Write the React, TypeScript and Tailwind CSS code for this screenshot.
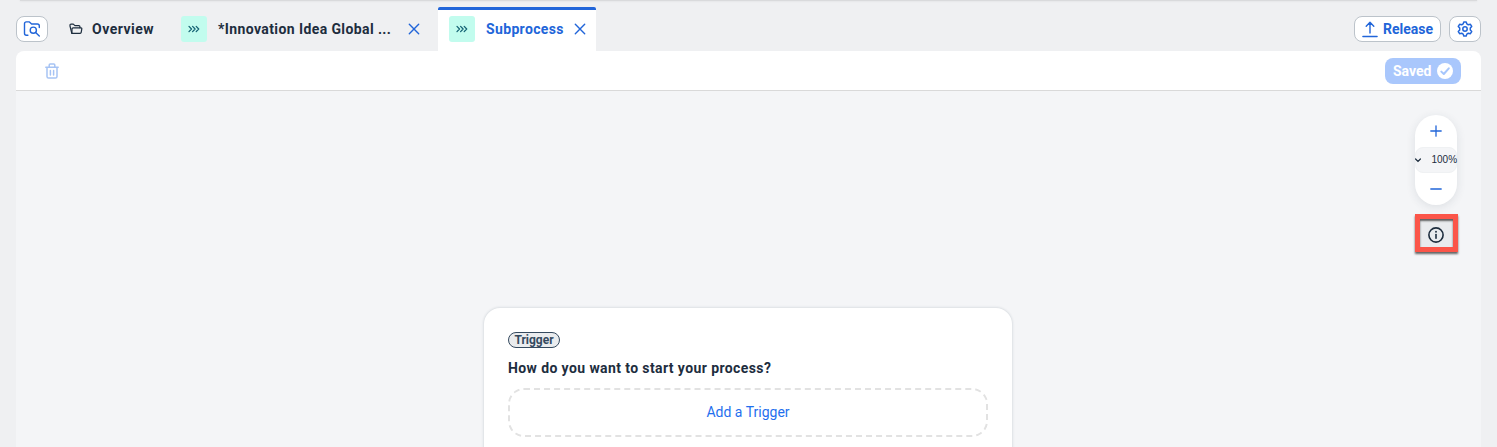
import React from "react";

function SearchFolderIcon() {
  return (
    <svg width="18" height="18" viewBox="0 0 18 18" fill="none" stroke="#2165d9" strokeWidth="1.400" strokeLinecap="round" strokeLinejoin="round">
      <path d="M4.900 15.200H3.400A1.900 1.900 0 0 1 1.500 13.300V3.800A1.900 1.900 0 0 1 3.400 1.900H6.400L8.600 4H14.400A1.900 1.900 0 0 1 16.300 5.900V7.600" />
      <circle cx="10.300" cy="10.200" r="3.100" />
      <path d="M12.600 12.500L16.300 16" />
    </svg>
  );
}

function OpenFolderIcon() {
  return (
    <svg width="14" height="12" viewBox="0 0 14 12" fill="none" stroke="#1d2d3e" strokeWidth="1.200" strokeLinecap="round" strokeLinejoin="round">
      <path d="M2.800 10.300L1 3V2.100A1 1 0 0 1 2 1.100H4.300L5.900 2.600H9.900A1 1 0 0 1 10.900 3.600V4.700" />
      <path d="M2.900 10.300L3 5.900A1.100 1.100 0 0 1 4.100 4.800H12A.8.8 0 0 1 12.800 5.800L12.200 9.400A1.100 1.100 0 0 1 11.100 10.300Z" />
    </svg>
  );
}

function ProcessIcon() {
  return (
    <span className="flex size-[26px] shrink-0 items-center justify-center rounded-[3px] bg-[#c2fcee]">
      <svg width="12" height="8" viewBox="0 0 12 8" fill="none" stroke="#156475" strokeWidth="1.300" strokeLinecap="round" strokeLinejoin="round">
        <path d="M1 1.400L3.500 4L1 6.600M4.600 1.400L7.100 4L4.600 6.600M8.200 1.400L10.700 4L8.200 6.600" />
      </svg>
    </span>
  );
}

function CloseIcon() {
  return (
    <svg className="shrink-0" width="12" height="12" viewBox="0 0 12 12" fill="none" stroke="#2165d9" strokeWidth="1.400" strokeLinecap="round">
      <path d="M1.300 1.300L10.700 10.700M10.700 1.300L1.300 10.700" />
    </svg>
  );
}

function UploadIcon() {
  return (
    <svg width="16" height="17" viewBox="0 0 16 17" fill="none" stroke="#2165d9" strokeWidth="1.400" strokeLinecap="round" strokeLinejoin="round">
      <path d="M8 12V1.500M4.200 5.200L8 1.300L11.800 5.200M.9 15.500H15.100" />
    </svg>
  );
}

function GearIcon() {
  return (
    <svg width="16" height="16" viewBox="0 0 16 16" fill="none" stroke="#2165d9" strokeWidth="1.500" strokeLinejoin="round">
      <path d="M6.800.9H9.200L9.800 2.900L11.300 3.750L13.400 3.300L14.700 5.400L13.300 7V9L14.700 10.600L13.400 12.700L11.300 12.250L9.800 13.100L9.200 15.100H6.800L6.200 13.100L4.700 12.250L2.600 12.700L1.300 10.600L2.700 9V7L1.300 5.400L2.600 3.300L4.700 3.750L6.200 2.900Z" />
      <circle cx="8" cy="8" r="2.200" />
    </svg>
  );
}

function TrashIcon() {
  return (
    <svg width="14" height="16" viewBox="0 0 14 16" fill="none" stroke="#a6c3f4" strokeWidth="1.500" strokeLinecap="round" strokeLinejoin="round">
      <path d="M.8 4.200H13.200M4.200 4V1.900A1 1 0 0 1 5.200.9H8.800A1 1 0 0 1 9.800 1.900V4M2 4.500V13.500A1.600 1.600 0 0 0 3.600 15.100H10.400A1.600 1.600 0 0 0 12 13.500V4.500M5.400 7.400V12M8.600 7.400V12" />
    </svg>
  );
}

function SavedIcon() {
  return (
    <svg width="16" height="16" viewBox="0 0 16 16" fill="none">
      <circle cx="8" cy="8" r="8" fill="#fff" />
      <path d="M4.300 8.600L6.800 11L11.800 5.300" stroke="#a6c6fc" strokeWidth="2" strokeLinecap="round" strokeLinejoin="round" />
    </svg>
  );
}

export default function App() {
  return (
    <div className="flex h-[447px] w-full flex-col overflow-hidden bg-[#eff0f2] px-4 font-[Roboto,sans-serif] text-sm text-[#1d2d3e]">
      <div className="mx-1 h-px shrink-0 bg-[#d9dadc] shadow-[0_0_2px_#cfd1d4]" />
      <header className="flex h-[50px] shrink-0 items-start whitespace-nowrap font-bold">
        <button className="mt-[15px] flex h-[26px] w-8 items-center justify-center rounded-lg border border-[#bcc3ca] bg-white">
          <SearchFolderIcon />
        </button>
        <div className="ml-[21px] mt-[15px] flex h-[26px] w-[112px] items-center">
          <OpenFolderIcon />
          <span className="ml-[9px] tracking-[0.500px]">Overview</span>
        </div>
        <div className="mt-[15px] flex h-[26px] w-[257px] items-center">
          <ProcessIcon />
          <span className="ml-[11px] w-[173px] tracking-[0.400px]">*Innovation Idea Global ...</span>
          <span className="ml-[17px] flex"><CloseIcon /></span>
        </div>
        <div className="mt-[6px] flex h-11 w-[158px] items-center rounded-t-[2px] border-t-[3px] border-[#2165d9] bg-white pb-[3px] pl-[11px] text-[#2165d9]">
          <ProcessIcon />
          <span className="ml-[11px] w-[77px] tracking-[0.350px]">Subprocess</span>
          <span className="ml-[11px] flex"><CloseIcon /></span>
        </div>
        <div className="ml-auto mt-[15px] flex gap-2 text-[#2165d9]">
          <button className="flex h-[26px] w-[87px] items-center gap-[5px] rounded-lg border border-[#bcc3ca] bg-white pl-[7px]">
            <UploadIcon />
            <span>Release</span>
          </button>
          <button className="flex h-[26px] w-8 items-center justify-center rounded-lg border border-[#bcc3ca] bg-white">
            <GearIcon />
          </button>
        </div>
      </header>
      <div className="flex h-10 shrink-0 items-center justify-between rounded-t-lg border-b border-[#d9d9d9] bg-white pl-[29px] pr-5">
        <TrashIcon />
        <button className="flex h-[26px] w-[76px] items-center justify-between rounded-lg bg-[#a9c7fc] px-2 font-bold text-white">
          <span>Saved</span>
          <SavedIcon />
        </button>
      </div>
      <main className="relative flex flex-1 bg-[#f4f5f7] pl-[468px] pt-[217px]">
        <section className="h-[200px] w-[528px] shrink-0 rounded-2xl bg-white px-6 pt-6 shadow-[0_0_3px_rgba(34,53,72,0.220)]">
          <div className="flex h-4 w-[52px] items-center justify-center rounded-full border border-[#354a5f] bg-[#eaecee] text-xs font-bold text-[#354a5f]">
            Trigger
          </div>
          <h2 className="mt-[10px] h-5 whitespace-nowrap font-bold leading-5 tracking-[0.400px]">How do you want to start your process?</h2>
          <button className="mt-[10px] flex h-[49px] w-full items-center justify-center rounded-2xl border-2 border-dashed border-[#e2e2e2] pb-[2px] text-[#1f6fee]">
            Add a Trigger
          </button>
        </section>
        <div className="absolute right-[23px] top-6 flex w-[43px] flex-col items-start gap-[9px]">
          <div className="flex h-[90px] w-[42px] flex-col rounded-[21px] bg-white shadow-[0_2px_10px_rgba(34,53,72,0.110)]">
            <button className="flex h-8 items-center justify-center">
              <svg width="12" height="12" viewBox="0 0 12 12" stroke="#2165d9" strokeWidth="1.300" strokeLinecap="round"><path d="M6 .8V11.200M.8 6H11.200" /></svg>
            </button>
            <div className="flex h-[26px] items-center rounded-lg border border-[#eff1f3] bg-[#f4f5f7] font-['Liberation_Sans',sans-serif] text-[10px]">
              <svg className="-ml-px shrink-0" width="6" height="5" viewBox="0 0 6 5" fill="none" stroke="#1d2d3e" strokeWidth="1.200" strokeLinecap="round"><path d="M.6 1L3 3.400L5.400 1" /></svg>
              <span className="ml-[10.500px]">100%</span>
            </div>
            <button className="flex h-[31px] items-center justify-center">
              <svg width="12" height="2" viewBox="0 0 12 2" stroke="#2165d9" strokeWidth="1.300" strokeLinecap="round"><path d="M.8 1H11.200" /></svg>
            </button>
          </div>
          <button className="flex h-[38px] w-[43px] items-center justify-center border-[5px] border-[#fb5549] bg-[#e9ebee] shadow-[0_2px_2px_rgba(0,0,0,0.600),inset_0_2px_2px_rgba(0,0,0,0.600)]">
            <svg className="relative -left-px top-[2px]" width="16" height="16" viewBox="0 0 16 16" fill="none" stroke="#1d2d3e" strokeWidth="1.600" strokeLinecap="round" strokeLinejoin="round">
              <circle cx="8" cy="8" r="7.100" />
              <path d="M8 7.500V11.300" />
              <circle cx="8" cy="4.700" r=".95" fill="#1d2d3e" stroke="none" />
            </svg>
          </button>
        </div>
      </main>
    </div>
  );
}
